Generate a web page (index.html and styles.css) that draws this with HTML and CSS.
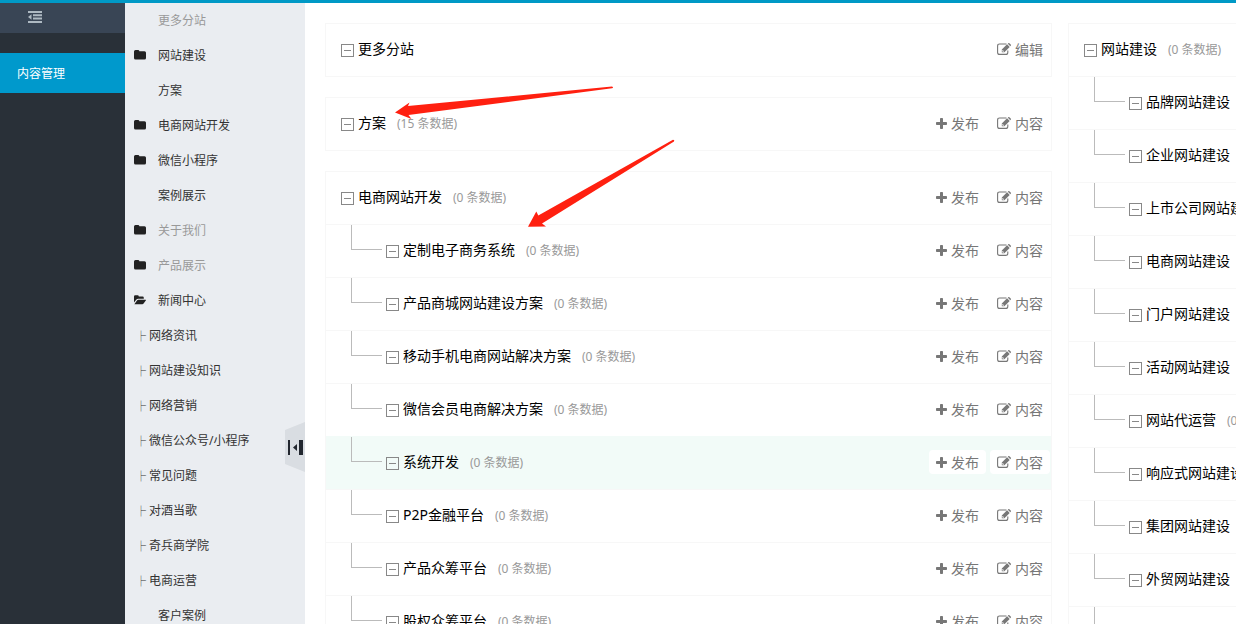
FILE: index.html
```html
<!DOCTYPE html>
<html lang="zh-CN">

<head>
    <meta charset="UTF-8">
    <meta name="viewport" content="width=device-width, initial-scale=1.0">
    <title>内容管理</title>
    <link rel="stylesheet" href="styles.css">
</head>

<body>
    <svg class="sprite" aria-hidden="true">
        <symbol id="folder" viewBox="0 0 12 10">
            <path d="M0 1.5Q0 0 1.5 0H4Q5.3 0 5.4 1.3H10.5Q12 1.3 12 2.8V8Q12 9.5 10.5 9.5H1.5Q0 9.5 0 8Z" />
        </symbol>
        <symbol id="folder-open" viewBox="0 0 12 10">
            <path d="M0 7.6V1.5Q0 .3 1.2 .3H3.6Q4.8 .3 4.8 1.5H8.6Q9.8 1.5 9.8 2.7V3.8H4.2Q3 3.8 2.2 4.8Z" />
            <path d="M.4 9.2L3 5.4Q3.5 4.7 4.3 4.7H11.6Q12.3 4.7 11.8 5.4L9.6 8.5Q9.1 9.2 8.3 9.2Z" />
        </symbol>
        <symbol id="plus" viewBox="0 0 11 11">
            <path d="M4 .8Q4 0 4.8 0H6.2Q7 0 7 .8V4H10.2Q11 4 11 4.8V6.2Q11 7 10.2 7H7V10.2Q7 11 6.2 11H4.8Q4 11 4 10.2V7H.8Q0 7 0 6.2V4.8Q0 4 .8 4H4Z" />
        </symbol>
        <symbol id="edit" viewBox="0 0 14 12">
            <path d="M9.5 1H2.6Q.6 1 .6 3V9.4Q.6 11.4 2.6 11.4H8.8Q10.8 11.4 10.8 9.4V7.6" fill="none" stroke="currentColor" stroke-width="1.1" />
            <path d="M4.8 9.2V6.6L10.1 1.3L12.7 3.9L7.4 9.2Z" />
            <path d="M10.8 .7L11.2 .3Q11.8 -.2 12.4 .3L13.7 1.6Q14.2 2.2 13.7 2.8L13.3 3.2Z" />
            <path d="M5.7 7V8.3H7" fill="none" stroke="#fff" stroke-width=".7" />
        </symbol>
    </svg>

    <div class="topbar"></div>
    <div class="layout">
        <nav class="sidebar">
            <button class="fold" aria-label="收起菜单">
                <svg width="14" height="12" viewBox="0 0 14 12">
                    <path d="M0 0H14V2H0ZM5 3.3H14V5.3H5ZM5 6.6H14V8.6H5ZM0 10H14V12H0ZM3.5 3.2V8.8L0 6Z" />
                </svg>
            </button>
            <a class="nav-item" href="#">内容管理</a>
        </nav>

        <aside class="menu">
            <ul>
                <li><a class="off" href="#"><i></i>更多分站</a></li>
                <li><a href="#"><svg><use href="#folder" /></svg>网站建设</a></li>
                <li><a href="#"><i></i>方案</a></li>
                <li><a href="#"><svg><use href="#folder" /></svg>电商网站开发</a></li>
                <li><a href="#"><svg><use href="#folder" /></svg>微信小程序</a></li>
                <li><a href="#"><i></i>案例展示</a></li>
                <li><a class="off" href="#"><svg><use href="#folder" /></svg>关于我们</a></li>
                <li><a class="off" href="#"><svg><use href="#folder" /></svg>产品展示</a></li>
                <li><a href="#"><svg><use href="#folder-open" /></svg>新闻中心</a></li>
                <li><a class="sub" href="#"><span>├</span>网络资讯</a></li>
                <li><a class="sub" href="#"><span>├</span>网站建设知识</a></li>
                <li><a class="sub" href="#"><span>├</span>网络营销</a></li>
                <li><a class="sub" href="#"><span>├</span>微信公众号/小程序</a></li>
                <li><a class="sub" href="#"><span>├</span>常见问题</a></li>
                <li><a class="sub" href="#"><span>├</span>对酒当歌</a></li>
                <li><a class="sub" href="#"><span>├</span>奇兵商学院</a></li>
                <li><a class="sub" href="#"><span>├</span>电商运营</a></li>
                <li><a href="#"><i></i>客户案例</a></li>
            </ul>
            <button class="collapse" aria-label="收起栏目">
                <svg width="20" height="50" viewBox="0 0 20 50">
                    <path d="M0 8L20 0V50L0 42Z" fill="#d9dde2" />
                    <path d="M3 18H5V33H3ZM14 18H18V33H14ZM12 22V29L8 25.5Z" fill="#22272f" />
                </svg>
            </button>
        </aside>

        <main class="content">
            <div class="column">
                <section class="card">
                    <div class="row">
                        <button class="toggle" aria-label="折叠"></button>
                        <span class="name">更多分站</span>
                        <div class="actions">
                            <button><svg class="edit"><use href="#edit" /></svg>编辑</button>
                        </div>
                    </div>
                </section>

                <section class="card">
                    <div class="row">
                        <button class="toggle" aria-label="折叠"></button>
                        <span class="name">方案</span>
                        <span class="count">(15 条数据)</span>
                        <div class="actions">
                            <button><svg class="plus"><use href="#plus" /></svg>发布</button>
                            <button><svg class="edit"><use href="#edit" /></svg>内容</button>
                        </div>
                    </div>
                </section>

                <section class="card">
                    <div class="row">
                        <button class="toggle" aria-label="折叠"></button>
                        <span class="name">电商网站开发</span>
                        <span class="count">(0 条数据)</span>
                        <div class="actions">
                            <button><svg class="plus"><use href="#plus" /></svg>发布</button>
                            <button><svg class="edit"><use href="#edit" /></svg>内容</button>
                        </div>
                    </div>
                    <div class="row child">
                        <button class="toggle" aria-label="折叠"></button>
                        <span class="name">定制电子商务系统</span>
                        <span class="count">(0 条数据)</span>
                        <div class="actions">
                            <button><svg class="plus"><use href="#plus" /></svg>发布</button>
                            <button><svg class="edit"><use href="#edit" /></svg>内容</button>
                        </div>
                    </div>
                    <div class="row child">
                        <button class="toggle" aria-label="折叠"></button>
                        <span class="name">产品商城网站建设方案</span>
                        <span class="count">(0 条数据)</span>
                        <div class="actions">
                            <button><svg class="plus"><use href="#plus" /></svg>发布</button>
                            <button><svg class="edit"><use href="#edit" /></svg>内容</button>
                        </div>
                    </div>
                    <div class="row child">
                        <button class="toggle" aria-label="折叠"></button>
                        <span class="name">移动手机电商网站解决方案</span>
                        <span class="count">(0 条数据)</span>
                        <div class="actions">
                            <button><svg class="plus"><use href="#plus" /></svg>发布</button>
                            <button><svg class="edit"><use href="#edit" /></svg>内容</button>
                        </div>
                    </div>
                    <div class="row child">
                        <button class="toggle" aria-label="折叠"></button>
                        <span class="name">微信会员电商解决方案</span>
                        <span class="count">(0 条数据)</span>
                        <div class="actions">
                            <button><svg class="plus"><use href="#plus" /></svg>发布</button>
                            <button><svg class="edit"><use href="#edit" /></svg>内容</button>
                        </div>
                    </div>
                    <div class="row child active">
                        <button class="toggle" aria-label="折叠"></button>
                        <span class="name">系统开发</span>
                        <span class="count">(0 条数据)</span>
                        <div class="actions">
                            <button><svg class="plus"><use href="#plus" /></svg>发布</button>
                            <button><svg class="edit"><use href="#edit" /></svg>内容</button>
                        </div>
                    </div>
                    <div class="row child">
                        <button class="toggle" aria-label="折叠"></button>
                        <span class="name">P2P金融平台</span>
                        <span class="count">(0 条数据)</span>
                        <div class="actions">
                            <button><svg class="plus"><use href="#plus" /></svg>发布</button>
                            <button><svg class="edit"><use href="#edit" /></svg>内容</button>
                        </div>
                    </div>
                    <div class="row child">
                        <button class="toggle" aria-label="折叠"></button>
                        <span class="name">产品众筹平台</span>
                        <span class="count">(0 条数据)</span>
                        <div class="actions">
                            <button><svg class="plus"><use href="#plus" /></svg>发布</button>
                            <button><svg class="edit"><use href="#edit" /></svg>内容</button>
                        </div>
                    </div>
                    <div class="row child">
                        <button class="toggle" aria-label="折叠"></button>
                        <span class="name">股权众筹平台</span>
                        <span class="count">(0 条数据)</span>
                        <div class="actions">
                            <button><svg class="plus"><use href="#plus" /></svg>发布</button>
                            <button><svg class="edit"><use href="#edit" /></svg>内容</button>
                        </div>
                    </div>
                </section>
            </div>

            <div class="column side">
                <section class="card">
                    <div class="row">
                        <button class="toggle" aria-label="折叠"></button>
                        <span class="name">网站建设</span>
                        <span class="count">(0 条数据)</span>
                    </div>
                    <div class="row child">
                        <button class="toggle" aria-label="折叠"></button>
                        <span class="name">品牌网站建设</span>
                    </div>
                    <div class="row child">
                        <button class="toggle" aria-label="折叠"></button>
                        <span class="name">企业网站建设</span>
                    </div>
                    <div class="row child">
                        <button class="toggle" aria-label="折叠"></button>
                        <span class="name">上市公司网站建设</span>
                    </div>
                    <div class="row child">
                        <button class="toggle" aria-label="折叠"></button>
                        <span class="name">电商网站建设</span>
                    </div>
                    <div class="row child">
                        <button class="toggle" aria-label="折叠"></button>
                        <span class="name">门户网站建设</span>
                    </div>
                    <div class="row child">
                        <button class="toggle" aria-label="折叠"></button>
                        <span class="name">活动网站建设</span>
                    </div>
                    <div class="row child">
                        <button class="toggle" aria-label="折叠"></button>
                        <span class="name">网站代运营</span>
                        <span class="count">(0 条数据)</span>
                    </div>
                    <div class="row child">
                        <button class="toggle" aria-label="折叠"></button>
                        <span class="name">响应式网站建设</span>
                    </div>
                    <div class="row child">
                        <button class="toggle" aria-label="折叠"></button>
                        <span class="name">集团网站建设</span>
                    </div>
                    <div class="row child">
                        <button class="toggle" aria-label="折叠"></button>
                        <span class="name">外贸网站建设</span>
                    </div>
                    <div class="row child"></div>
                </section>
            </div>

            <!-- 标注箭头 -->
            <svg class="arrows" width="290" height="150" viewBox="390 80 290 150">
                <path d="M395 112.5L409.5 102.5L408 106L612 86.5Q614 87.5 612 88.2L408.5 115L411.5 119Z" />
                <path d="M528 226.8L536.3 211.5L538.3 215.5L673 139.8Q675 140 674 141.5L542 223.6L546 226.6Z" />
            </svg>
        </main>
    </div>
</body>

</html>
```

FILE: styles.css
```css
* {
    box-sizing: border-box;
}

body {
    margin: 0;
    height: 100vh;
    display: flex;
    flex-direction: column;
    overflow: hidden;
    font-family: "Noto Sans", "Noto Sans CJK SC", sans-serif;
    font-size: 12px;
    color: #333;
    background-color: #fff;
}

ul {
    margin: 0;
    padding: 0;
    list-style: none;
}

a {
    color: inherit;
    text-decoration: none;
}

button {
    padding: 0;
    border: none;
    background: none;
    font: inherit;
    color: inherit;
    cursor: pointer;
}

svg {
    fill: currentColor;
}

.sprite {
    position: absolute;
    width: 0;
    height: 0;
}

.topbar {
    flex: none;
    height: 3px;
    background-color: #0099c6;
}

.layout {
    flex: 1;
    min-height: 0;
    display: flex;
}

/* 左侧主导航 */
.sidebar {
    flex: none;
    width: 125px;
    background-color: #293038;
}

.fold {
    display: flex;
    width: 100%;
    height: 30px;
    padding: 8px 28px;
    margin-bottom: 20px;
    background-color: #394555;
    color: #aeb9c2;
}

.nav-item {
    display: block;
    height: 40px;
    padding: 1px 0 0 17px;
    line-height: 40px;
    background-color: #0099cc;
    color: #fff;
}

/* 栏目菜单 */
.menu {
    position: relative;
    flex: none;
    width: 180px;
    background-color: #eaedf1;
}

.menu ul {
    height: 100%;
    overflow: hidden;
}

.menu a {
    display: flex;
    align-items: center;
    gap: 12px;
    height: 35px;
    padding-left: 9px;
    line-height: 35px;
}

.menu i,
.menu a svg {
    width: 12px;
    height: 10px;
    margin-bottom: 1px;
    color: #222;
}

.menu .off {
    color: #999;
}

.menu .sub {
    gap: 3px;
    padding-left: 11px;
}

.menu .sub span {
    font-family: "Noto Sans CJK SC", sans-serif;
    font-size: 10px;
    font-weight: bold;
}

.collapse {
    position: absolute;
    right: 0;
    top: 419px;
    height: 50px;
}

.collapse svg {
    display: block;
}

/* 内容区 */
.content {
    position: relative;
    flex: 1;
    min-width: 0;
    display: flex;
    align-items: flex-start;
    gap: 16px;
    padding: 20px 0 0 20px;
    overflow: hidden;
}

.column {
    flex: 1;
    min-width: 0;
    display: flex;
    flex-direction: column;
    gap: 20px;
}

.side {
    flex: 0 0 168px;
}

.side .card {
    border-right: none;
    overflow: hidden;
}

.card {
    border: 1px solid #f7f7f7;
}

.row {
    display: flex;
    align-items: center;
    height: 52px;
    padding: 0 1px 2px 15px;
    white-space: nowrap;
}

.child {
    height: 53px;
    padding-left: 25px;
    border-top: 1px solid #f7f7f7;
}

.child::before {
    content: "";
    flex: none;
    align-self: flex-start;
    width: 30px;
    height: 24px;
    margin-right: 4px;
    border-left: 1px solid #bbb;
    border-bottom: 1px solid #bbb;
}

.toggle {
    flex: none;
    display: flex;
    align-items: center;
    justify-content: center;
    width: 13px;
    height: 13px;
    margin: 2px 4px 0 0;
    border: 1px solid #888;
}

.toggle::before {
    content: "";
    width: 7px;
    height: 1px;
    background-color: #888;
}

.name {
    font-size: 14px;
    line-height: 20px;
    color: #000;
}

.count {
    margin-left: 11px;
    color: #999;
}

.actions {
    display: flex;
    gap: 4px;
    margin-left: auto;
}

.actions button {
    display: flex;
    align-items: center;
    gap: 4px;
    height: 24px;
    padding: 0 7px;
    border-radius: 4px;
    background-color: #fff;
    font-size: 14px;
    color: #777;
}

.plus {
    width: 11px;
    height: 11px;
}

.edit {
    width: 14px;
    height: 12px;
}

.active {
    border-color: #f2fbf8;
    background-color: #f2fbf8;
}

.arrows {
    position: absolute;
    left: 85px;
    top: 77px;
    fill: #ff2010;
    pointer-events: none;
}
```
